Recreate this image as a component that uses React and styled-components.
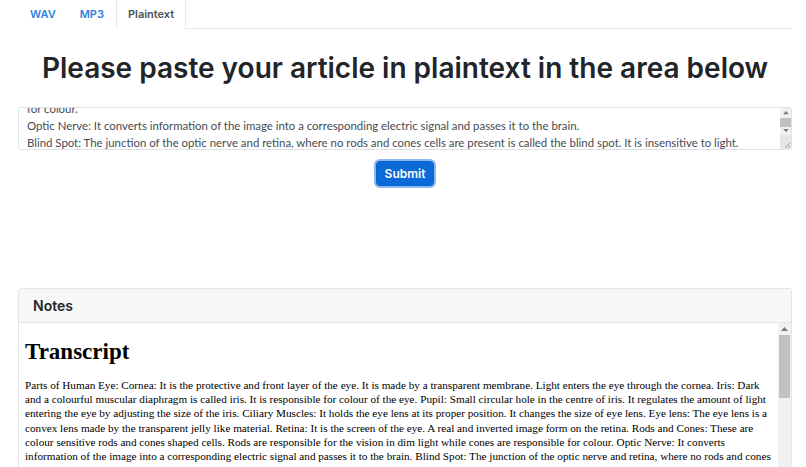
import React, { useEffect, useRef } from "react";
import styled, { createGlobalStyle } from "styled-components";

const GlobalStyle = createGlobalStyle`
  html, body {
    margin: 0;
    padding: 0;
    background: #fff;
    overflow: hidden;
  }
  body {
    font-family: Inter, "Noto Sans", sans-serif;
    color: #212529;
  }
`;

const Page = styled.div`
  padding: 0 14px 0 18px;
`;

const Tabs = styled.ul`
  display: flex;
  margin: 0;
  padding: 0;
  list-style: none;
  border-bottom: 1px solid #e6e8eb;
`;

const Tab = styled.li`
  padding: 6px 11px;
  font-size: 11px;
  line-height: 16px;
  font-weight: 600;
  color: ${(p) => (p.active ? "#495057" : "#2f7fe0")};
  background: #fff;
  border: 1px solid ${(p) => (p.active ? "#e6e8eb" : "transparent")};
  border-top: none;
  margin-bottom: -1px;
  border-bottom-color: #fff;
`;

const Heading = styled.h1`
  margin: 21px 0 21px;
  text-align: center;
  font-size: 28px;
  line-height: 36px;
  font-weight: 600;
  color: #212529;
`;

const Field = styled.div`
  display: flex;
  height: 43px;
  box-sizing: border-box;
  border: 1px solid #dfe2e6;
  border-radius: 3px;
  overflow: hidden;
`;

const TextArea = styled.textarea`
  flex: 1;
  display: block;
  box-sizing: border-box;
  height: 100%;
  margin: 0;
  padding: 1px 8px 0;
  border: none;
  font-family: Lato, "Open Sans", sans-serif;
  font-size: 11.4px;
  line-height: 17px;
  color: #454c53;
  resize: none;
  outline: none;
  overflow: hidden;
`;

const Rail = styled.div`
  width: ${(p) => p.w}px;
  flex-shrink: 0;
  display: flex;
  flex-direction: column;
  align-items: center;
  background: #f1f1f1;
`;

const ArrowBox = styled.div`
  width: 100%;
  height: ${(p) => p.h}px;
  display: flex;
  align-items: center;
  justify-content: center;
`;

const Thumb = styled.div`
  width: ${(p) => p.w}px;
  height: ${(p) => p.h}px;
  background: #c1c1c1;
`;

const Grip = styled.div`
  flex: 1;
  width: 100%;
  display: flex;
  align-items: flex-end;
  justify-content: flex-end;
  background: #e6e6e6;
`;

const Actions = styled.div`
  display: flex;
  justify-content: center;
  padding-top: 11px;
`;

const Button = styled.button`
  padding: 3px 8px;
  font-family: Inter, sans-serif;
  font-size: 12px;
  line-height: 17px;
  font-weight: 600;
  color: #fff;
  background: #0b6ad8;
  border: 1px solid #0a63cc;
  border-radius: 4px;
  box-shadow: 0 0 0 2px #8bb8f0;
  cursor: pointer;
`;

const Card = styled.div`
  margin-top: 102px;
  border: 1px solid #e3e5e8;
  border-radius: 3px;
  background: #fff;
`;

const CardHeader = styled.div`
  height: 33px;
  display: flex;
  align-items: center;
  padding: 0 14px;
  background: #f7f7f7;
  border-bottom: 1px solid #e3e5e8;
  font-size: 14px;
  font-weight: 600;
  color: #212529;
`;

const CardBody = styled.div`
  display: flex;
  height: 300px;
`;

const Doc = styled.div`
  flex: 1;
  overflow: hidden;
  padding: 0 6px;
  font-family: "Liberation Serif", "Times New Roman", serif;
  color: #000;
`;

const DocTitle = styled.h1`
  margin: 17px 0 14px;
  font-size: 23px;
  line-height: 24px;
  font-weight: 700;
`;

const DocText = styled.p`
  margin: 0;
  font-size: 11.2px;
  line-height: 14.2px;
`;

const Triangle = ({ down, size = 5 }) => (
  <svg width={size + 2} height={size} viewBox="0 0 7 5">
    <path d={down ? "M0 0h7L3.5 4z" : "M0 4h7L3.5 0z"} fill="#7a7a7a" />
  </svg>
);

const GripIcon = () => (
  <svg width="8" height="8" viewBox="0 0 8 8">
    <path d="M7 2L2 7M7 5L5 7" stroke="#9a9a9a" strokeWidth="1" />
  </svg>
);

const parts = [
  "Parts of Human Eye:",
  "Cornea: It is the protective and front layer of the eye. It is made by a transparent membrane. Light enters the eye through the cornea.",
  "Iris: Dark and a colourful muscular diaphragm is called iris. It is responsible for colour of the eye.",
  "Pupil: Small circular hole in the centre of iris. It regulates the amount of light entering the eye by adjusting the size of the iris.",
  "Ciliary Muscles: It holds the eye lens at its proper position. It changes the size of eye lens.",
  "Eye lens: The eye lens is a convex lens made by the transparent jelly like material.",
  "Retina: It is the screen of the eye. A real and inverted image form on the retina.",
  "Rods and Cones: These are colour sensitive rods and cones shaped cells. Rods are responsible for the vision in dim light while cones are responsible for colour.",
  "Optic Nerve: It converts information of the image into a corresponding electric signal and passes it to the brain.",
  "Blind Spot: The junction of the optic nerve and retina, where no rods and cones cells are present is called the blind spot. It is insensitive to light.",
];

export default function App() {
  const areaRef = useRef(null);

  useEffect(() => {
    const el = areaRef.current;
    if (el) el.scrollTop = el.scrollHeight - el.clientHeight - 2;
  }, []);

  return (
    <>
      <GlobalStyle />
      <Page>
        <Tabs>
          <Tab>WAV</Tab>
          <Tab>MP3</Tab>
          <Tab active>Plaintext</Tab>
        </Tabs>
        <Heading>Please paste your article in plaintext in the area below</Heading>
        <Field>
          <TextArea ref={areaRef} defaultValue={parts.join("\n")} spellCheck />
          <Rail w={11}>
            <ArrowBox h={10}>
              <Triangle size={4} />
            </ArrowBox>
            <Thumb w={11} h={9} />
            <ArrowBox h={8}>
              <Triangle down size={4} />
            </ArrowBox>
            <Grip>
              <GripIcon />
            </Grip>
          </Rail>
        </Field>
        <Actions>
          <Button>Submit</Button>
        </Actions>
        <Card>
          <CardHeader>Notes</CardHeader>
          <CardBody>
            <Doc>
              <DocTitle>Transcript</DocTitle>
              <DocText>{parts.join(" ")}</DocText>
            </Doc>
            <Rail w={13}>
              <ArrowBox h={12}>
                <Triangle />
              </ArrowBox>
              <Thumb w={11} h={63} />
            </Rail>
          </CardBody>
        </Card>
      </Page>
    </>
  );
}
